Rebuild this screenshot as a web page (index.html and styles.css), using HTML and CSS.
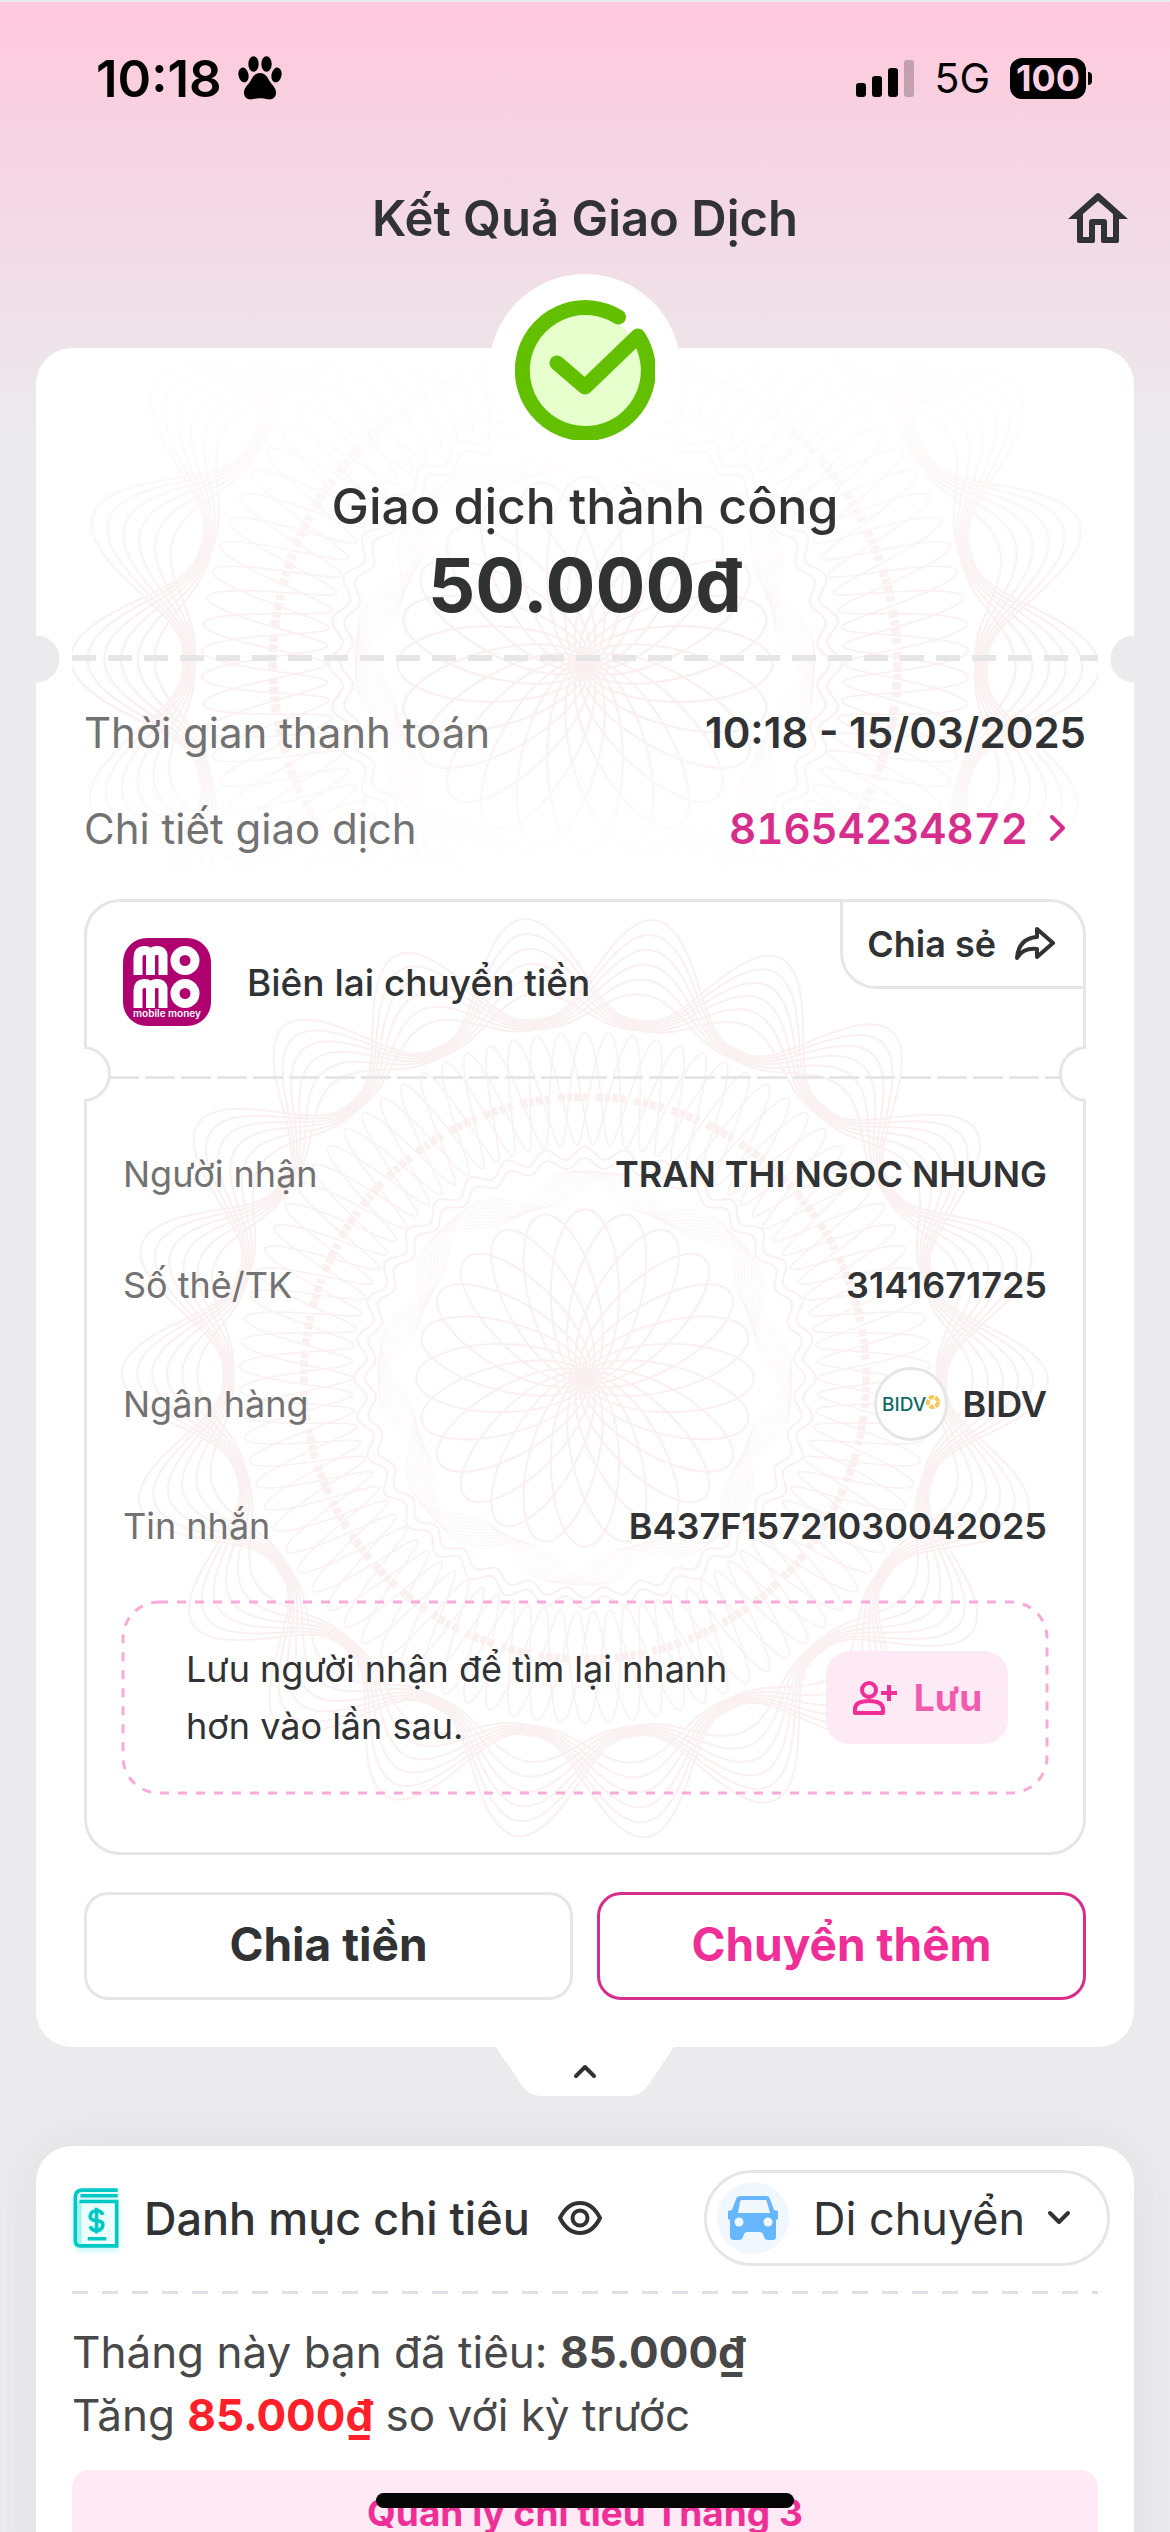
FILE: index.html
```html
<!DOCTYPE html>
<html lang="vi">
<head>
<meta charset="utf-8">
<meta name="viewport" content="width=device-width, initial-scale=1">
<title>Kết Quả Giao Dịch</title>
<link rel="stylesheet" href="styles.css">
</head>
<body>
<div class="screen">
  <div class="status">
    <div class="status-group">
      <span class="status-time">10:18</span>
      <svg class="paw" viewBox="0 0 44 44" aria-hidden="true">
        <ellipse cx="5.500" cy="19" rx="5" ry="7.500" transform="rotate(-12 5.500 19)"/>
        <ellipse cx="15.500" cy="8" rx="5.200" ry="7.800"/>
        <ellipse cx="28.500" cy="8" rx="5.200" ry="7.800"/>
        <ellipse cx="38.500" cy="19" rx="5" ry="7.500" transform="rotate(12 38.500 19)"/>
        <path d="M22 17c5 0 7.500 4 9.500 8 3 4.500 7 7.500 6.500 12.500-.5 4.500-4 6.500-8 5.800-3-.6-5-1.100-8-1.100s-5 .5-8 1.100c-4 .7-7.500-1.300-8-5.800C5.500 32.500 9.500 29.500 12.500 25c2-4 4.500-8 9.500-8z"/>
      </svg>
    </div>
    <div class="status-group status-right">
      <svg class="signal" viewBox="0 0 58 38" aria-hidden="true">
        <rect x="0" y="24" width="10" height="14" rx="3"/>
        <rect x="16" y="17" width="10" height="21" rx="3"/>
        <rect x="32" y="9" width="10" height="29" rx="3"/>
        <rect x="48" y="1" width="10" height="37" rx="3" opacity=".22"/>
      </svg>
      <span class="status-net">5G</span>
      <span class="battery">100</span>
    </div>
  </div>

  <header class="topbar">
    <h1>Kết Quả Giao Dịch</h1>
    <button class="home" aria-label="Trang chủ">
      <svg viewBox="0 0 60 50" fill="currentColor" fill-rule="evenodd">
        <path d="M28 1q2-2 4 0L60 26H51V48q0 2-2 2H35q-2 0-2-2V32H27V48q0 2-2 2H11q-2 0-2-2V26H0zM30 8 15 21V44H21V29q0-3 3-3H36q3 0 3 3V44H45V21z"/>
      </svg>
    </button>
  </header>

  <main class="content">
    <section class="card result">
      <div class="result-art"><svg class="guilloche" viewBox="-460 -460 920 920" aria-hidden="true"></svg></div>
      <div class="badge">
        <svg viewBox="0 0 140 140" aria-hidden="true">
          <circle cx="70" cy="70" r="57" fill="#e6ffcc"/>
          <path d="M103.500 17A63 63 0 1 0 123 36L70 87 42 63" fill="none" stroke="#63c000" stroke-width="15" stroke-linecap="round" stroke-linejoin="round"/>
        </svg>
      </div>
      <div class="summary">
        <p class="summary-title">Giao dịch thành công</p>
        <p class="summary-amount">50.000đ</p>
      </div>
      <div class="tear"></div>
      <dl class="facts">
        <div><dt>Thời gian thanh toán</dt><dd>10:18 - 15/03/2025</dd></div>
        <div><dt>Chi tiết giao dịch</dt><dd><a href="#detail">81654234872
          <svg class="next" viewBox="0 0 18 28" fill="none" stroke="currentColor" stroke-width="4" stroke-linecap="round" stroke-linejoin="round" aria-hidden="true"><path d="m4 3 11 11L4 25"/></svg></a></dd></div>
      </dl>

      <article class="receipt">
        <div class="receipt-art"><svg class="guilloche" viewBox="-460 -460 920 920" aria-hidden="true"></svg></div>
        <div class="receipt-head">
          <svg class="momo" viewBox="0 0 88 88" role="img" aria-label="MoMo">
            <rect width="88" height="88" rx="24" fill="#ae006e"/>
            <g fill="none" stroke="#fff" stroke-width="9">
              <path d="M15 37V19q0-6 6-6.500t6.500 6V37M27.500 19q0-6.500 6.500-6.500t6 6.500V37"/>
              <circle cx="62" cy="22.500" r="10"/>
              <path d="M15 70V52q0-6 6-6.500t6.500 6V70M27.500 52q0-6.500 6.500-6.500t6 6.500V70"/>
              <circle cx="62" cy="55.500" r="10"/>
            </g>
            <text x="44" y="79" text-anchor="middle" class="momo-tag">mobile money</text>
          </svg>
          <h2>Biên lai chuyển tiền</h2>
          <button class="share">Chia sẻ
            <svg viewBox="0 0 42 36" fill="none" stroke="currentColor" stroke-width="4" stroke-linejoin="round" aria-hidden="true"><path d="M23 3 39 17 23 31V23C13 22 7 25 3 32 4 19 11 12 23 11z"/></svg>
          </button>
        </div>
        <div class="receipt-tear"></div>
        <dl class="rows">
          <div><dt>Người nhận</dt><dd>TRAN THI NGOC NHUNG</dd></div>
          <div><dt>Số thẻ/TK</dt><dd>3141671725</dd></div>
          <div class="row-bank"><dt>Ngân hàng</dt><dd>
            <svg class="bank" viewBox="0 0 74 74" aria-hidden="true">
              <circle cx="37" cy="37" r="35.500" fill="#fff" stroke="#e6e6e6" stroke-width="3"/>
              <text x="8" y="44" class="bank-name" fill="#126a66">BIDV</text>
              <circle cx="59" cy="35" r="5" fill="none" stroke="#fac750" stroke-width="4" stroke-dasharray="5 1.280"/>
            </svg>BIDV</dd></div>
          <div class="row-note"><dt>Tin nhắn</dt><dd>B437F15721030042025</dd></div>
        </dl>
        <div class="save">
          <svg class="save-line" aria-hidden="true"><rect/></svg>
          <p>Lưu người nhận để tìm lại nhanh hơn vào lần sau.</p>
          <button>
            <svg viewBox="0 0 46 36" fill="none" stroke="currentColor" stroke-width="4" aria-hidden="true"><circle cx="17" cy="10" r="7"/><path d="M3 33v-4q0-8 14-8t14 8v4z" stroke-linejoin="round"/><path d="M37 5v16M29 13h16"/></svg>
            <span>Lưu</span>
          </button>
        </div>
      </article>

      <div class="actions">
        <button>Chia tiền</button>
        <button class="primary">Chuyển thêm</button>
      </div>
    </section>

    <button class="collapse" aria-label="Thu gọn">
      <svg class="collapse-shape" viewBox="0 0 178 49" aria-hidden="true"><path d="M0 0H178L153 37Q145 49 134 49H44Q33 49 25 37z" fill="#fff"/><path d="m80 29 9-9 9 9" fill="none" stroke="#303233" stroke-width="4" stroke-linecap="round" stroke-linejoin="round"/></svg>
    </button>

    <section class="card spending">
      <div class="spending-head">
        <svg class="book" viewBox="0 0 44 58" aria-hidden="true">
          <path d="M2 12h40v43H6q-4 0-4-4z" fill="#ebfffd"/>
          <path d="M3 13h5v41H3z" fill="#a5f2ee"/>
          <g fill="none" stroke="#00c8c5" stroke-width="3.500">
            <path d="M43 2H9Q2 2 2 9v42q0 5 5 5h35V13H6M43 7.500H7" />
            <path d="M28.500 26q-1-4-6-4t-6 4.500 6 5 6 5-6 4.500-6-4M22.500 19v25M14 49h18"/>
          </g>
        </svg>
        <h2>Danh mục chi tiêu</h2>
        <button class="eye" aria-label="Ẩn số tiền">
          <svg viewBox="0 0 44 34" fill="none" stroke="currentColor" stroke-width="4"><path d="M2 17C7 7 14 2 22 2s15 5 20 15C37 27 30 32 22 32S7 27 2 17z" stroke-linejoin="round"/><circle cx="22" cy="17" r="7.500"/></svg>
        </button>
        <label class="category">
          <svg class="car" viewBox="0 0 72 72" aria-hidden="true">
            <circle cx="36" cy="36" r="36" fill="#f0f7ff"/>
            <path d="M24 14h25q3 0 4 3l4 11 4 1v8l-2 1v16q0 4-3 4h-5q-3 0-4-3l-1-3q-1-2-3-2H30q-2 0-3 2l-1 3q-1 3-4 3h-5q-4 0-4-4V38l-2-1v-8l4-1 4-11q1-3 5-3z" fill="#66b7ff"/>
            <path d="M25 18h23q2 0 2 2l3 11H21l2-11q0-2 2-2z" fill="#f0f7ff"/>
            <circle cx="22" cy="40" r="4.500" fill="#f0f7ff"/><circle cx="51" cy="40" r="4.500" fill="#f0f7ff"/>
          </svg>
          <select aria-label="Danh mục"><option>Di chuyển</option><option>Ăn uống</option></select>
          <svg class="down" viewBox="0 0 24 16" fill="none" stroke="currentColor" stroke-width="4" stroke-linecap="round" stroke-linejoin="round" aria-hidden="true"><path d="m3 3 9 9 9-9"/></svg>
        </label>
      </div>
      <div class="divider"></div>
      <p class="spent">Tháng này bạn đã tiêu: <strong>85.000₫</strong></p>
      <p class="spent">Tăng <strong class="up">85.000₫</strong> so với kỳ trước</p>
      <button class="manage">Quản lý chi tiêu Tháng 3</button>
    </section>
  </main>
  <div class="home-indicator"></div>
</div>
<script src="script.js"></script>
</body>
</html>
```
FILE: styles.css
```css
*, *::before, *::after { box-sizing: border-box; }

body {
  margin: 0;
  font-family: Inter, "Liberation Sans", sans-serif;
  color: #303233;
  background: #ebebed;
}

h1, h2, p, dl, dd { margin: 0; }

button, select {
  font: inherit;
  color: inherit;
  background: none;
  border: 0;
  padding: 0;
  margin: 0;
}

svg { display: block; flex: none; }

.screen {
  height: 100vh;
  overflow: hidden auto;
  scrollbar-width: none;
  border-top: 2px solid #ebebed;
  background: linear-gradient(#ffc8dd 0, #f6d3e0 130px, #ebebed 440px);
}

/* Status bar */
.status {
  display: flex;
  justify-content: space-between;
  align-items: center;
  height: 152px;
  padding: 0 84px 0 96px;
  color: #000;
}
.status-group { display: flex; align-items: center; gap: 16px; }
.status-right { gap: 20px; }
.status-time { font-size: 51px; font-weight: 600; }
.paw { width: 44px; height: 44px; fill: #000; }
.signal { width: 58px; height: 38px; }
.status-net { font-size: 41px; }
.battery {
  position: relative;
  width: 76px;
  height: 41px;
  border-radius: 12px;
  background: #000;
  color: #fbd0e0;
  font-size: 36px;
  font-weight: 700;
  line-height: 41px;
  text-align: center;
}
.battery::after {
  content: "";
  position: absolute;
  left: 78px;
  top: 14px;
  width: 4px;
  height: 13px;
  border-radius: 0 4px 4px 0;
  background: #000;
}

/* Title bar */
.topbar {
  display: grid;
  grid-template-columns: 60px 1fr 60px;
  align-items: center;
  height: 128px;
  padding: 0 42px;
}
.topbar h1 {
  grid-column: 2;
  font-size: 49px;
  font-weight: 600;
  text-align: center;
}
.home svg { width: 60px; height: 50px; }

.content { padding: 66px 36px 0; }

.card {
  border-radius: 36px;
  background: #fff;
}

/* Transaction result */
.result {
  position: relative;
  padding: 0 48px 47px;
}
.result-art {
  position: absolute;
  inset: 0 36px auto;
  height: 530px;
  overflow: hidden;
  -webkit-mask-image: linear-gradient(transparent, #000 50%, #000 70%, transparent);
  mask-image: linear-gradient(transparent, #000 50%, #000 70%, transparent);
}
.result-art .guilloche {
  width: 100%;
  height: auto;
  aspect-ratio: 1;
  margin-top: -197px;
}
.badge {
  position: absolute;
  left: 50%;
  top: -74px;
  display: grid;
  place-items: center;
  width: 192px;
  height: 192px;
  margin-left: -96px;
  border-radius: 50%;
  background: #fff;
}
.badge svg { width: 140px; height: 140px; }

.summary {
  position: relative;
  padding-top: 126px;
  text-align: center;
}
.summary-title { font-size: 50px; font-weight: 500; line-height: 64px; }
.summary-amount { font-size: 74px; font-weight: 700; line-height: 94px; }

.tear {
  position: relative;
  height: 48px;
  margin: 3px -48px 0;
  background:
    radial-gradient(circle at 0 24px, #ebebed 23px, transparent 24px),
    radial-gradient(circle at 100% 24px, #ebebed 23px, transparent 24px);
}
.tear::before {
  content: "";
  position: absolute;
  inset: 20px 36px auto;
  height: 6px;
  background: repeating-linear-gradient(90deg, #e6e6e6 0 24px, transparent 24px 36px);
}

.facts { position: relative; padding-top: 1px; }
.facts > div {
  display: flex;
  justify-content: space-between;
  align-items: center;
  height: 96px;
  font-size: 42px;
}
dt { color: #727272; }
dd { font-weight: 600; }
.facts a {
  display: flex;
  align-items: center;
  gap: 20px;
  padding-right: 20px;
  color: #d62e8c;
  font-variant-numeric: tabular-nums;
  text-decoration: none;
}
.next { width: 18px; height: 28px; }

/* Receipt */
.receipt {
  position: relative;
  margin-top: 23px;
  padding: 0 36px 59px;
  border: 3px solid #e6e6e6;
  border-radius: 36px;
}
.receipt-art {
  position: absolute;
  inset: 14px 36px auto;
}
.receipt-art .guilloche { width: 100%; height: auto; aspect-ratio: 1; }
.receipt-head {
  position: relative;
  display: flex;
  align-items: center;
  gap: 36px;
  height: 160px;
}
.momo { width: 88px; height: 88px; }
.momo-tag { fill: #fff; font-size: 10px; font-weight: 600; }
.receipt h2 { font-size: 37px; font-weight: 500; }
.share {
  position: absolute;
  right: -36px;
  top: 0;
  display: flex;
  align-items: center;
  gap: 18px;
  height: 87px;
  padding: 0 27px 0 24px;
  border: solid #e6e6e6;
  border-width: 0 0 3px 3px;
  border-radius: 0 0 0 36px;
  font-size: 36px;
  font-weight: 600;
}
.share svg { width: 42px; height: 36px; }

.receipt-tear {
  position: relative;
  height: 56px;
  margin: -16px -39px 0;
  overflow: hidden;
  background: repeating-linear-gradient(90deg, #e6e6e6 0 30px, transparent 30px 36px) 25px 30px / calc(100% - 50px) 3px no-repeat;
}
.receipt-tear::before,
.receipt-tear::after {
  content: "";
  position: absolute;
  top: 0;
  width: 56px;
  height: 56px;
  border: 3px solid #e6e6e6;
  border-radius: 50%;
  background: #fff;
}
.receipt-tear::before { left: -29px; }
.receipt-tear::after { right: -29px; }

.rows { position: relative; padding-top: 16px; }
.rows > div {
  display: flex;
  justify-content: space-between;
  align-items: center;
  height: 111px;
  font-size: 36px;
}
.rows > .row-bank { height: 128px; }
.rows > .row-note { height: 116px; }
.rows dd { display: flex; align-items: center; gap: 14px; }
.bank { width: 74px; height: 74px; }
.bank-name { font-size: 19px; font-weight: 500; }

.save {
  position: relative;
  display: flex;
  align-items: center;
  justify-content: space-between;
  gap: 24px;
  height: 191px;
  margin-top: 18px;
  padding: 0 39px 0 63px;
}
.save-line {
  position: absolute;
  inset: 0;
  width: 100%;
  height: 100%;
  overflow: visible;
}
.save-line rect {
  width: 100%;
  height: 100%;
  rx: 36px;
  fill: none;
  stroke: #f9aad7;
  stroke-width: 3;
  stroke-dasharray: 9 9;
}
.save p { flex: 1; max-width: 580px; font-size: 36px; line-height: 57px; }
.save button {
  position: relative;
  display: flex;
  align-items: center;
  justify-content: center;
  gap: 16px;
  width: 182px;
  height: 93px;
  border-radius: 24px;
  background: #feeaf4;
  color: #ef2f97;
  font-size: 37px;
  font-weight: 700;
}
.save button span { color: #f15bad; }
.save button svg { width: 46px; height: 36px; }

.actions {
  position: relative;
  display: grid;
  grid-template-columns: 1fr 1fr;
  gap: 24px;
  margin-top: 37px;
}
.actions button {
  height: 108px;
  padding-bottom: 4px;
  border: 3px solid #e6e6e6;
  border-radius: 24px;
  font-size: 46px;
  font-weight: 700;
}
.actions .primary { border-color: #d62e8c; color: #ef2f97; }

.collapse { display: block; margin: 0 auto 50px; }
.collapse-shape { width: 178px; height: 49px; }

/* Spending */
.spending {
  padding: 24px 36px 48px;
  box-shadow: 0 0 60px rgb(0 0 0 / 5%);
}
.spending-head {
  display: flex;
  align-items: center;
  height: 96px;
  margin-right: -12px;
}
.book { width: 48px; height: 60px; filter: drop-shadow(0 3px 3px #c2f5f3); }
.spending h2 { margin-left: 24px; font-size: 45px; font-weight: 500; }
.eye { margin-left: 28px; }
.eye svg { width: 44px; height: 34px; }
.category {
  position: relative;
  display: flex;
  align-items: center;
  width: 406px;
  height: 96px;
  margin-left: auto;
  padding: 0 36px 0 10px;
  border: 3px solid #e6e6e6;
  border-radius: 48px;
}
.car { width: 72px; height: 72px; }
.category select {
  flex: 1;
  min-width: 0;
  height: 72px;
  padding-left: 24px;
  appearance: none;
  font-size: 45px;
}
.down { width: 24px; height: 16px; }
.divider {
  height: 3px;
  margin: 25px 0 27px;
  background: repeating-linear-gradient(90deg, #dfdfe6 0 16px, transparent 16px 30px);
}
.spent { color: #484848; font-size: 44px; line-height: 63px; }
.spent strong { font-weight: 700; }
.spent .up { color: #ff2029; }
.manage {
  display: block;
  width: 100%;
  height: 84px;
  margin-top: 23px;
  border-radius: 18px;
  background: #fee9f4;
  color: #ef2f97;
  font-size: 37px;
  font-weight: 700;
}

.home-indicator {
  position: fixed;
  left: 50%;
  bottom: 24px;
  width: 418px;
  height: 15px;
  border-radius: 8px;
  background: #060606;
  transform: translateX(-50%);
}

/* Security rosette */
.guilloche { overflow: visible; fill: none; stroke: #faf0f0; stroke-width: 2; }
```
FILE: script.js
```js
// Draws the banknote-style rosette behind the result and the receipt.
(function () {
  const NS = "http://www.w3.org/2000/svg";

  function add(svg, name, attrs) {
    const el = document.createElementNS(NS, name);
    for (const key in attrs) el.setAttribute(key, attrs[key]);
    svg.appendChild(el);
    return el;
  }

  // Closed curve given by its radius at each angle.
  function curve(svg, radius, width) {
    let d = "";
    for (let i = 0; i < 1440; i++) {
      const t = (i / 1440) * Math.PI * 2;
      const r = radius(t);
      d += (i ? "L" : "M") + (r * Math.sin(t)).toFixed(1) + " " + (-r * Math.cos(t)).toFixed(1);
    }
    add(svg, "path", { d: d + "z", "stroke-width": width });
  }

  document.querySelectorAll(".guilloche").forEach(function (svg) {
    // Central flower
    for (let i = 0; i < 24; i++) {
      add(svg, "ellipse", { cx: 0, cy: -84, rx: 34, ry: 84, transform: "rotate(" + i * 15 + ")" });
    }
    // Fine mesh and its scalloped rim
    for (let i = 0; i < 10; i++) {
      curve(svg, t => 190 + 16 * Math.sin(8 * t + i * 0.25), 0.6);
    }
    curve(svg, t => 214 + 5 * Math.cos(36 * t), 2);
    curve(svg, t => 224 + 6 * Math.cos(36 * t), 2);
    // Ring of long loops
    for (let i = 0; i < 3; i++) {
      curve(svg, t => 288 + 56 * Math.cos(30 * t + i * Math.PI * 2 / 3), 1.5);
    }
    add(svg, "circle", { r: 280, "stroke-width": 8, "stroke-dasharray": "7 2 5 2 7 2 5 8" });
    // Outer lobes: two interleaved families, flat along the inner edge
    for (let i = 0; i < 6; i++) {
      const height = 36 + i * 13;
      const lobe = phase => t => 350 + i * 2 + height * Math.pow((1 + Math.cos(11 * t + phase)) / 2, 1.4);
      curve(svg, lobe(1.5), 2);
      curve(svg, lobe(4.6), 2);
    }
  });
})();
```
